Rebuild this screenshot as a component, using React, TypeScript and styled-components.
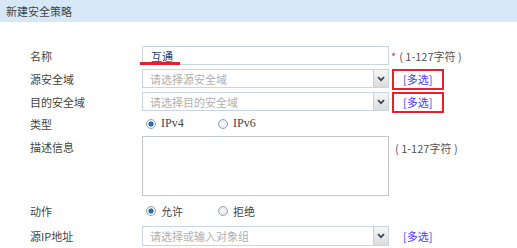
import React from "react";
import styled, { createGlobalStyle } from "styled-components";

const Global = createGlobalStyle`
  html, body { margin: 0; padding: 0; background: #fff; }
  body { font-family: "Noto Sans CJK SC", "Noto Sans", sans-serif; font-size: 11px; color: #444; }
  * { box-sizing: border-box; }
`;

const Page = styled.div`
  width: 517px;
  height: 248px;
  overflow: hidden;
  display: flex;
  flex-direction: column;
`;

const Header = styled.div`
  height: 23px;
  background: #d6e8f8;
  display: flex;
  align-items: center;
  padding-left: 6px;
  font-size: 11px;
  color: #444;
`;

const Form = styled.div`
  display: flex;
  flex-direction: column;
  gap: 4px;
  padding-top: 24px;
`;

const Row = styled.div<{ $h: number; $top?: boolean }>`
  display: grid;
  grid-template-columns: 142px 247px auto;
  align-items: ${(p) => (p.$top ? "start" : "center")};
  height: ${(p) => p.$h}px;
`;

const Label = styled.div<{ $pt?: number }>`
  padding-left: 30px;
  line-height: 14px;
  padding-top: ${(p) => p.$pt ?? 0}px;
  color: #444;
  white-space: nowrap;
`;

const InputBox = styled.div`
  position: relative;
  height: 19px;
  border: 1px solid #c9d5e4;
  background: #fff;
  display: flex;
  align-items: center;
  padding-left: 8px;
  color: #26407a;
`;

const Annotation = styled.span`
  position: absolute;
  left: -3px;
  top: 15px;
  width: 40px;
  height: 2.5px;
  background: #e3202b;
`;

const SelectBox = styled.div<{ $h?: number }>`
  height: ${(p) => p.$h ?? 19}px;
  border: 1px solid #c9d5e4;
  background: #fff;
  display: flex;
  align-items: stretch;
`;

const Placeholder = styled.div`
  flex: 1;
  display: flex;
  align-items: center;
  padding-left: 7px;
  color: #b0b0b0;
`;

const DropButton = styled.div`
  width: 15px;
  border-left: 1px solid #c9d0da;
  background: linear-gradient(#f6f6f6, #dcdcdc);
  display: flex;
  align-items: center;
  justify-content: center;
`;

const Note = styled.div<{ $pt?: number; $pl?: number }>`
  padding-left: ${(p) => p.$pl ?? 2}px;
  padding-top: ${(p) => p.$pt ?? 0}px;
  color: #555;
  white-space: nowrap;
  display: flex;
  align-items: center;
`;

const Star = styled.span`
  color: #e03030;
  margin-right: 3px;
`;

const MultiLink = styled.a<{ $marked?: boolean }>`
  position: relative;
  margin-left: 14px;
  color: #4a3cf0;
  text-decoration: none;
  white-space: nowrap;
  line-height: 14px;
  &::after {
    content: "";
    display: ${(p) => (p.$marked ? "block" : "none")};
    position: absolute;
    left: -11px;
    right: -12px;
    top: -2px;
    bottom: -3px;
    border: 2px solid #e8202a;
  }
`;

const Radios = styled.div`
  display: flex;
  align-items: center;
  padding-left: 4px;
`;

const RadioItem = styled.label`
  display: flex;
  align-items: center;
  width: 72px;
  gap: 5px;
  color: #444;
`;

const RadioDot = styled.span<{ $on?: boolean }>`
  width: 10px;
  height: 10px;
  border-radius: 50%;
  border: 1px solid #9aa3ad;
  background: ${(p) =>
    p.$on
      ? "radial-gradient(circle, #2f7fd0 0, #1e5ea8 2.2px, #e8eef5 2.8px, #f4f6f8 100%)"
      : "radial-gradient(circle, #fafafa 0, #dfe3e8 100%)"};
`;

const Latin = styled.span`
  font-family: "Liberation Serif", serif;
  font-size: 12px;
  color: #444;
`;

const TextArea = styled.div`
  height: 60px;
  border: 1px solid #c3c6cd;
  background: #fff;
`;

const Footer = styled.div`
  margin-top: 2px;
  flex: 1;
  background: #fbf7ef;
`;

const Chevron = () => (
  <svg width="8" height="6" viewBox="0 0 8 6">
    <path d="M1 1.2 L4 4.2 L7 1.2" fill="none" stroke="#34465f" strokeWidth="1.7" />
  </svg>
);

const Select = ({ text, h }: { text: string; h?: number }) => (
  <SelectBox $h={h}>
    <Placeholder>{text}</Placeholder>
    <DropButton>
      <Chevron />
    </DropButton>
  </SelectBox>
);

export default function App() {
  return (
    <Page>
      <Global />
      <Header>新建安全策略</Header>
      <Form>
        <Row $h={19}>
          <Label>名称</Label>
          <InputBox>
            互通
            <Annotation />
          </InputBox>
          <Note>
            <Star>*</Star>( 1-127字符 )
          </Note>
        </Row>
        <Row $h={19}>
          <Label>源安全域</Label>
          <Select text="请选择源安全域" />
          <div>
            <MultiLink $marked>[多选]</MultiLink>
          </div>
        </Row>
        <Row $h={19}>
          <Label>目的安全域</Label>
          <Select text="请选择目的安全域" />
          <div>
            <MultiLink $marked>[多选]</MultiLink>
          </div>
        </Row>
        <Row $h={17}>
          <Label>类型</Label>
          <Radios>
            <RadioItem>
              <RadioDot $on />
              <Latin>IPv4</Latin>
            </RadioItem>
            <RadioItem>
              <RadioDot />
              <Latin>IPv6</Latin>
            </RadioItem>
          </Radios>
        </Row>
        <Row $h={60} $top>
          <Label $pt={4}>描述信息</Label>
          <TextArea />
          <Note $pt={4} $pl={6}>( 1-127字符 )</Note>
        </Row>
        <Row $h={22}>
          <Label>动作</Label>
          <Radios>
            <RadioItem>
              <RadioDot $on />
              允许
            </RadioItem>
            <RadioItem>
              <RadioDot />
              拒绝
            </RadioItem>
          </Radios>
        </Row>
        <Row $h={20}>
          <Label>源IP地址</Label>
          <Select text="请选择或输入对象组" h={20} />
          <div>
            <MultiLink>[多选]</MultiLink>
          </div>
        </Row>
      </Form>
      <Footer />
    </Page>
  );
}
